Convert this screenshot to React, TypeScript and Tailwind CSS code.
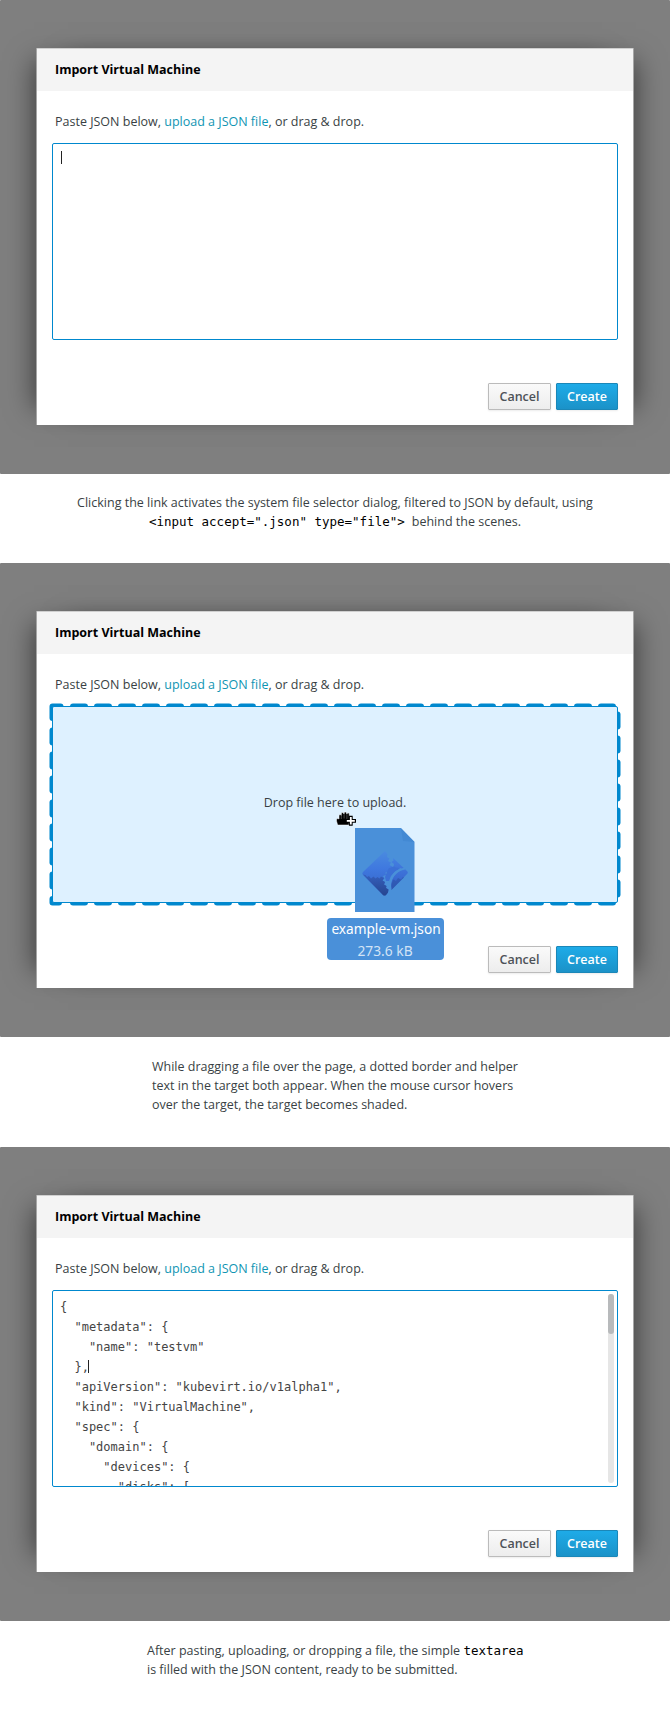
import type { ReactNode } from "react";

function Caret({ className = "" }: { className?: string }) {
  return <span className={`inline-block w-px bg-[#222] ${className}`} />;
}

function Modal({ children }: { children: ReactNode }) {
  return (
    <div className="flex h-[474px] flex-col rounded-[1px] bg-[#7f7f7f] px-9 pt-12">
      <div className="flex h-[377px] flex-col border-x border-black/35 bg-white shadow-[-17px_-2px_26px_-15px_rgba(0,0,0,0.5),17px_-2px_26px_-15px_rgba(0,0,0,0.5)]">
        <div className="flex h-[42.5px] items-center border-t border-black/15 bg-[#f4f4f4] pl-[18px] text-[12.5px] font-bold text-black">
          Import Virtual Machine
        </div>
        <p className="mt-[21px] h-5 pl-[18px] leading-5">
          Paste JSON below, <a className="text-[#0f95b3]">upload a JSON file</a>, or drag &amp; drop.
        </p>
        <div className="mx-[15px] mt-[11px] h-[197px]">{children}</div>
        <div className="mt-[43.5px] mr-[15px] flex justify-end gap-[5px]">
          <button className="h-[27px] w-[63px] rounded-[1px] border border-[#bbb] bg-linear-to-b from-[#fafafa] to-[#ededed] pb-px text-[12.5px] font-semibold text-[#4d5258] shadow-[0_1px_2px_rgba(0,0,0,0.08)]">
            Cancel
          </button>
          <button className="h-[27px] w-[62px] rounded-[1px] border border-[#1b87b8] bg-linear-to-b from-[#1eabe8] to-[#1b92c8] pb-px text-[12.5px] font-semibold text-white shadow-[0_1px_2px_rgba(0,0,0,0.08)]">
            Create
          </button>
        </div>
      </div>
    </div>
  );
}

const box = "h-full rounded-[2px] border border-[#0088ce]";
const columns = Array.from({ length: 23 }, (_, i) => 24 + i * 24);
const rows = Array.from({ length: 8 }, (_, i) => i * 24);

function DashedFrame() {
  return (
    <svg
      className="absolute -left-[3px] -top-[3px]"
      width="572"
      height="203"
      fill="none"
      stroke="#0088ce"
      strokeWidth="6"
      strokeLinecap="round"
      strokeLinejoin="round"
    >
      <path d="M11.5 3.5H3.5V15" />
      <path d="M3.5 196v3.5H10" />
      {columns.map((x) => (
        <g key={x}>
          <path d={`M${x} 3.5h12`} />
          <path d={`M${x} 199.5h12`} />
        </g>
      ))}
      {rows.map((y) => (
        <g key={y}>
          {y < 168 && <path d={`M3.5 ${y + 27.5}v12`} />}
          <path d={`M568.5 ${y + 11.5}v12`} />
        </g>
      ))}
    </svg>
  );
}

function FileIcon() {
  return (
    <svg width="60" height="84" viewBox="0 0 60 84">
      <defs>
        <linearGradient id="gem" x1="0" y1="0" x2="0" y2="1">
          <stop offset="0" stopColor="#4a8bdf" />
          <stop offset="0.4" stopColor="#3f78df" />
          <stop offset="1" stopColor="#3361c4" />
        </linearGradient>
        <linearGradient id="gemLow" x1="0" y1="0" x2="0" y2="1">
          <stop offset="0" stopColor="#3560bd" />
          <stop offset="1" stopColor="#264590" />
        </linearGradient>
        <linearGradient id="gemSide" x1="0" y1="0" x2="0" y2="1">
          <stop offset="0" stopColor="#4480e2" />
          <stop offset="0.6" stopColor="#3a6cd4" />
          <stop offset="1" stopColor="#3158b4" />
        </linearGradient>
      </defs>
      <path d="M0 0H46L59.5 14V84H0Z" fill="#4a90d9" />
      <path d="M46 0.5L59.5 14L48 13Z" fill="#4389d3" />
      <path
        d="M30 23L32.500 26L32 29L34.500 30.500L33 33L36 34.500L34.500 37L37.500 38.500L36.500 41L33.500 41L33 44L30.500 44.500L31 47L28 48L29.500 50.500L27.500 52.500L30 54L29 56.500L31.500 58L31 60L33.500 61.500L33 64.500L31 67Q29.500 68 28 67L8 47Q6.500 45.500 8 44Z"
        fill="url(#gem)"
      />
      <path
        d="M8 46.500L10.500 47L12 49L14 48L16 50.500L18.500 48.500L20.500 50.500L22.500 49L24.500 50.500L26 48.500L29 50L27.500 52.500L30 54L29 56.500L31.500 58L31 60L33.500 61.500L33 64.500L31 67Q29.500 68 28 67Z"
        fill="url(#gemLow)"
      />
      <path
        d="M38 30L52.500 43.500Q53.500 45 52 46L36.500 62Q35 56 37.500 51Q41 44 48 41.500L45 40L42 41.500L41 39L38.500 39L39 36L36.500 34L38.500 32.500Z"
        fill="url(#gemSide)"
      />
      <path d="M33.500 40.500L38.500 38.500L45 40.500L40 43.500L36 48L34 53L31 53L30 49Z" fill="#3b70d6" />
      <path d="M50 40.500Q41 42 37 49Q34.500 54 35.500 61" fill="none" stroke="#4a90d9" strokeWidth="1.800" />
      <path d="M37 61Q36 55 38.500 51.500L41 53L43 50L46 51.500L48 49L49 49.500L37 61Z" fill="#2e55ae" opacity=".7" />
    </svg>
  );
}

function GrabCursor() {
  return (
    <svg width="21" height="16" viewBox="0 0 21 16">
      <path
        d="M1.500 13.500L.5 10V8L2 7.500L3 8V4L4.500 3.500L5.200 4.500L5.500 1.800L7 1.500L8 3L8.500 1L10 1L10.800 3L12 1.800L13.200 2.500L13.500 9L13 14H2Z"
        fill="#000"
        stroke="#fff"
        strokeWidth=".5"
      />
      <path d="M5.300 4.500V8M8.100 3V7.500M10.900 3V8" stroke="#777" strokeWidth=".6" />
      <path d="M14.800 4.800V14.800M9.600 9.800H20" stroke="#000" strokeWidth="3.800" />
      <path d="M14.800 6V13.600M10.800 9.800H18.800" stroke="#fff" strokeWidth="1.800" />
    </svg>
  );
}

const json = `{
  "metadata": {
    "name": "testvm"
  },`;
const jsonRest = `
  "apiVersion": "kubevirt.io/v1alpha1",
  "kind": "VirtualMachine",
  "spec": {
    "domain": {
      "devices": {
        "disks": [`;

export default function App() {
  return (
    <main className="h-[1717px] w-[670px] overflow-hidden bg-white font-['Open_Sans',sans-serif] text-[12.5px] leading-[19px] text-[#393f44]">
      <Modal>
        <div className={`${box} px-2 pt-1.5`}>
          <Caret className="h-[13px]" />
        </div>
      </Modal>
      <div className="h-[89px] pt-[19px] text-center">
        <p>Clicking the link activates the system file selector dialog, filtered to JSON by default, using</p>
        <p>
          <code className="mr-[7px] font-['DejaVu_Sans_Mono',monospace] text-[12.5px] text-black">
            {'<input accept=".json" type="file">'}
          </code>
          behind the scenes.
        </p>
      </div>

      <Modal>
        <div className="relative h-full">
          <DashedFrame />
          <div className={`${box} relative flex justify-center bg-[#def1ff] pt-[86px]`}>
            <span>Drop file here to upload.</span>
          </div>
          <div className="absolute left-[284px] top-[105px]">
            <GrabCursor />
          </div>
          <div className="absolute left-[275px] top-[122px] flex w-[117px] flex-col items-center">
            <div className="-ml-px">
              <FileIcon />
            </div>
            <div className="mt-[6.5px] flex h-[42px] w-full flex-col items-center rounded-[4px] bg-[#4a90d9] font-['Noto_Sans',sans-serif] text-[15px] leading-[22px] whitespace-nowrap text-white">
              <span className="-mt-px scale-x-[0.91]">example-vm.json</span>
              <span className="scale-x-[0.92] text-[#d2e3f6]">273.6 kB</span>
            </div>
          </div>
        </div>
      </Modal>
      <div className="h-[110px] pl-[152px] pt-5">
        <p>While dragging a file over the page, a dotted border and helper</p>
        <p>text in the target both appear. When the mouse cursor hovers</p>
        <p>over the target, the target becomes shaded.</p>
      </div>

      <Modal>
        <div className={`${box} flex justify-between overflow-hidden`}>
          <pre className="pl-[7px] pt-[6px] font-['DejaVu_Sans_Mono',monospace] text-[12px] leading-5 text-[#444]">
            {json}
            <Caret className="-ml-px h-[13px] align-[-2px]" />
            {jsonRest}
          </pre>
          <div className="mr-[3px] mt-[3px] h-[189px] w-[6px] rounded-full bg-[#e6e6e6]">
            <div className="h-10 rounded-full bg-[#b8babc]" />
          </div>
        </div>
      </Modal>
      <div className="pl-[147px] pt-5">
        <p>
          After pasting, uploading, or dropping a file, the simple{" "}
          <code className="font-['DejaVu_Sans_Mono',monospace] text-[12.5px] text-black">textarea</code>
        </p>
        <p>is filled with the JSON content, ready to be submitted.</p>
      </div>
    </main>
  );
}
